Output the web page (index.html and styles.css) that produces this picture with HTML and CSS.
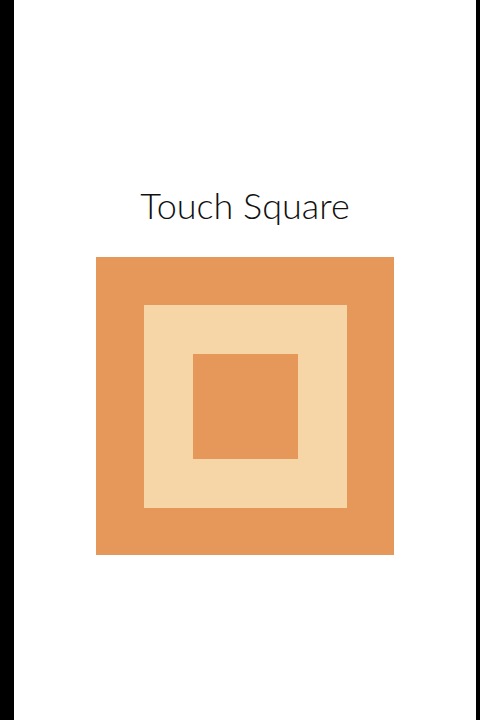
FILE: index.html
```html
<!DOCTYPE html>
<html>
<head>
<meta charset="utf-8">
<link rel="stylesheet" href="styles.css">
</head>
<body>
<div class="page">
  <h1 class="title">Touch Square</h1>
  <div class="square outer">
    <div class="square middle">
      <div class="square inner"></div>
    </div>
  </div>
</div>
</body>
</html>
```
FILE: styles.css
```css
html, body {
  margin: 0;
  padding: 0;
  background: #000;
}
.page {
  margin-left: 14px;
  width: 462px;
  height: 720px;
  background: #fff;
  display: flex;
  flex-direction: column;
  align-items: center;
}
.title {
  margin: 185px 0 0 0;
  font-family: Lato, "Liberation Sans", sans-serif;
  font-weight: 300;
  font-size: 36px;
  line-height: 41px;
  color: #111;
}
.square {
  box-sizing: border-box;
  display: flex;
}
.outer {
  margin-top: 31px;
  width: 298px;
  height: 298px;
  padding: 47.5px;
  background: #e6985a;
}
.middle {
  width: 203px;
  height: 203px;
  padding: 49px;
  background: #f6d6a6;
}
.inner {
  width: 105px;
  height: 105px;
  background: #e6985a;
}
```
